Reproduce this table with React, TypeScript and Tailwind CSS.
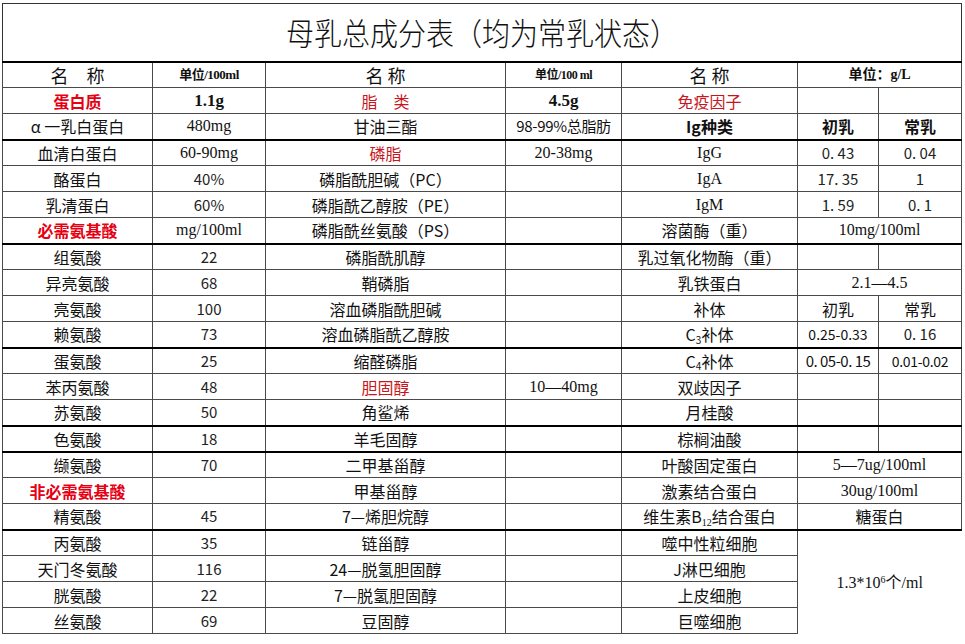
import type { ReactNode } from "react";

type Cell = {
  t?: ReactNode;
  c?: string;
  span?: number;
  rows?: number;
};

const SERIF = "font-['Liberation_Serif','Noto_Sans_CJK_SC',serif]";
const CJK = "font-['Noto_Sans_CJK_SC','DejaVu_Sans',sans-serif]";

const redB = `${CJK} font-bold text-[#e60012]`;
const red = `${CJK} text-[#c8161d]`;
const num = `${CJK} text-[15px] text-[#222]`;
const lat = `${SERIF} text-[16px]`;

const widths = [150, 113, 240, 116, 176, 81, 83];

// rows whose top border is a heavy black line
const heavy = new Set([3, 7, 11, 14, 15, 18]);

const rows: Cell[][] = [
  [
    { t: "名　称", c: `${CJK} text-[18px]` },
    { t: "单位/100ml", c: `${SERIF} text-[13px] font-bold tracking-[-0.5px]` },
    { t: "名 称", c: `${CJK} text-[18px]` },
    { t: "单位/100 ml", c: `${SERIF} text-[12px] font-bold tracking-[-0.5px]` },
    { t: "名 称", c: `${CJK} text-[18px]` },
    { t: "单位：g/L", c: `${SERIF} text-[14px] font-bold`, span: 2 },
  ],
  [
    { t: "蛋白质", c: redB },
    { t: "1.1g", c: `${SERIF} text-[17px] font-bold` },
    { t: "脂　类", c: red },
    { t: "4.5g", c: `${SERIF} text-[17px] font-bold` },
    { t: "免疫因子", c: red },
    {},
    {},
  ],
  [
    { t: "α 一乳白蛋白" },
    { t: "480mg", c: lat },
    { t: "甘油三酯" },
    { t: "98-99%总脂肪", c: `${CJK} text-[15px] tracking-[-0.3px]` },
    { t: "Ig种类", c: `${CJK} font-bold` },
    { t: "初乳", c: `${CJK} font-bold` },
    { t: "常乳", c: `${CJK} font-bold` },
  ],
  [
    { t: "血清白蛋白" },
    { t: "60-90mg", c: lat },
    { t: "磷脂", c: red },
    { t: "20-38mg", c: lat },
    { t: "IgG", c: lat },
    { t: "0. 43", c: num },
    { t: "0. 04", c: num },
  ],
  [
    { t: "酪蛋白" },
    { t: "40%", c: num },
    { t: "磷脂酰胆碱（PC）" },
    {},
    { t: "IgA", c: lat },
    { t: "17. 35", c: num },
    { t: "1", c: num },
  ],
  [
    { t: "乳清蛋白" },
    { t: "60%", c: num },
    { t: "磷脂酰乙醇胺（PE）" },
    {},
    { t: "IgM", c: lat },
    { t: "1. 59", c: num },
    { t: "0. 1", c: num },
  ],
  [
    { t: "必需氨基酸", c: redB },
    { t: "mg/100ml", c: lat },
    { t: "磷脂酰丝氨酸（PS）" },
    {},
    { t: "溶菌酶（重）" },
    { t: "10mg/100ml", c: lat, span: 2 },
  ],
  [
    { t: "组氨酸" },
    { t: "22", c: num },
    { t: "磷脂酰肌醇" },
    {},
    { t: "乳过氧化物酶（重）" },
    {},
    {},
  ],
  [
    { t: "异亮氨酸" },
    { t: "68", c: num },
    { t: "鞘磷脂" },
    {},
    { t: "乳铁蛋白" },
    { t: "2.1—4.5", c: lat, span: 2 },
  ],
  [
    { t: "亮氨酸" },
    { t: "100", c: num },
    { t: "溶血磷脂酰胆碱" },
    {},
    { t: "补体" },
    { t: "初乳" },
    { t: "常乳" },
  ],
  [
    { t: "赖氨酸" },
    { t: "73", c: num },
    { t: "溶血磷脂酰乙醇胺" },
    {},
    {
      t: (
        <>
          C<sub className="text-[10px]">3</sub>补体
        </>
      ),
    },
    { t: "0.25-0.33", c: `${CJK} text-[14px]` },
    { t: "0. 16", c: num },
  ],
  [
    { t: "蛋氨酸" },
    { t: "25", c: num },
    { t: "缩醛磷脂" },
    {},
    {
      t: (
        <>
          C<sub className="text-[10px]">4</sub>补体
        </>
      ),
    },
    { t: "0. 05-0. 15", c: `${CJK} text-[15px] tracking-[-0.5px]` },
    { t: "0.01-0.02", c: `${CJK} text-[14px] tracking-[-0.3px]` },
  ],
  [
    { t: "苯丙氨酸" },
    { t: "48", c: num },
    { t: "胆固醇", c: red },
    { t: "10—40mg", c: lat },
    { t: "双歧因子" },
    {},
    {},
  ],
  [
    { t: "苏氨酸" },
    { t: "50", c: num },
    { t: "角鲨烯" },
    {},
    { t: "月桂酸" },
    {},
    {},
  ],
  [
    { t: "色氨酸" },
    { t: "18", c: num },
    { t: "羊毛固醇" },
    {},
    { t: "棕榈油酸" },
    {},
    {},
  ],
  [
    { t: "缬氨酸" },
    { t: "70", c: num },
    { t: "二甲基甾醇" },
    {},
    { t: "叶酸固定蛋白" },
    { t: "5—7ug/100ml", c: lat, span: 2 },
  ],
  [
    { t: "非必需氨基酸", c: redB },
    {},
    { t: "甲基甾醇" },
    {},
    { t: "激素结合蛋白" },
    { t: "30ug/100ml", c: lat, span: 2 },
  ],
  [
    { t: "精氨酸" },
    { t: "45", c: num },
    { t: "7—烯胆烷醇" },
    {},
    {
      t: (
        <>
          维生素B<sub className={`${SERIF} text-[10px]`}>12</sub>结合蛋白
        </>
      ),
    },
    { t: "糖蛋白", span: 2 },
  ],
  [
    { t: "丙氨酸" },
    { t: "35", c: num },
    { t: "链甾醇" },
    {},
    { t: "噬中性粒细胞" },
    {
      t: (
        <>
          1.3*10<sup className="text-[10px]">6</sup>
          <span className={CJK}>个</span>/ml
        </>
      ),
      c: `${lat} !border-r-0 !border-b-0 border-r-white`,
      span: 2,
      rows: 4,
    },
  ],
  [
    { t: "天门冬氨酸" },
    { t: "116", c: num },
    { t: "24—脱氢胆固醇" },
    {},
    { t: "J淋巴细胞" },
  ],
  [
    { t: "胱氨酸" },
    { t: "22", c: num },
    { t: "7—脱氢胆固醇" },
    {},
    { t: "上皮细胞" },
  ],
  [
    { t: "丝氨酸" },
    { t: "69", c: num },
    { t: "豆固醇" },
    {},
    { t: "巨噬细胞" },
  ],
];

export default function App() {
  return (
    <div className="h-[644px] w-[965px] overflow-hidden bg-white pl-[2px] pt-[3px] text-[#111]">
      <table className="w-[959px] table-fixed border-collapse">
        <colgroup>
          {widths.map((w, i) => (
            <col key={i} style={{ width: w }} />
          ))}
        </colgroup>
        <tbody>
          <tr className="h-[58px]">
            <td
              colSpan={7}
              className="border border-[#333] border-b-2 border-b-black text-center align-middle font-['Noto_Sans_CJK_SC',sans-serif] text-[28px] font-light text-[#111]"
            >
              <span className="inline-block scale-y-[1.1]">母乳总成分表（均为常乳状态）</span>
            </td>
          </tr>
          {rows.map((row, r) => (
            <tr key={r} className="h-[26px]">
              {row.map((cell, i) => (
                <td
                  key={i}
                  colSpan={cell.span}
                  rowSpan={cell.rows}
                  className={`overflow-visible whitespace-nowrap border border-[#4a4a4a] p-0 text-center align-middle leading-[24px] ${
                    heavy.has(r) ? "border-t-2 border-t-black" : ""
                  } ${cell.c ?? `${CJK} text-[16px]`}`}
                >
                  {cell.t}
                </td>
              ))}
            </tr>
          ))}
        </tbody>
      </table>
    </div>
  );
}
